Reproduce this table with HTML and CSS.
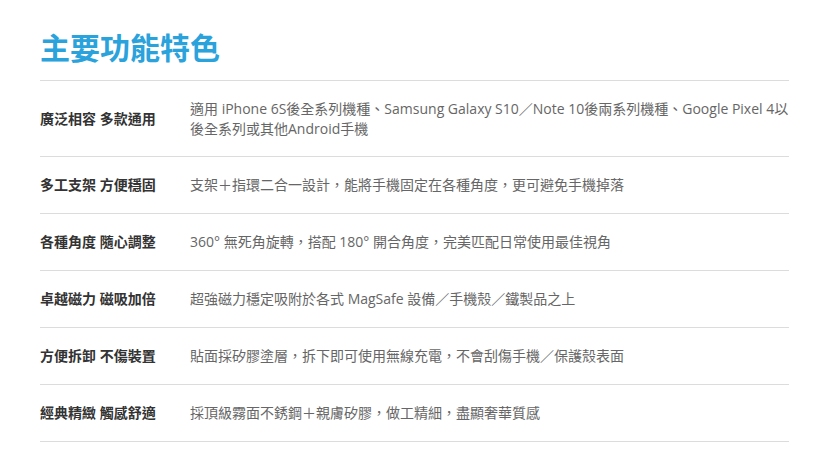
FILE: index.html
```html
<!DOCTYPE html>
<html lang="zh-Hant">
<head>
<meta charset="utf-8">
<link rel="stylesheet" href="styles.css">
</head>
<body>
<section class="features">
  <h2 class="features-title">主要功能特色</h2>
  <div class="features-table">
    <div class="row">
      <div class="label">廣泛相容 多款通用</div>
      <div class="desc">適用 iPhone 6S後全系列機種、Samsung Galaxy S10／Note 10後兩系列機種、Google Pixel 4以後全系列或其他Android手機</div>
    </div>
    <div class="row">
      <div class="label">多工支架 方便穩固</div>
      <div class="desc">支架＋指環二合一設計，能將手機固定在各種角度，更可避免手機掉落</div>
    </div>
    <div class="row">
      <div class="label">各種角度 隨心調整</div>
      <div class="desc">360° 無死角旋轉，搭配 180° 開合角度，完美匹配日常使用最佳視角</div>
    </div>
    <div class="row">
      <div class="label">卓越磁力 磁吸加倍</div>
      <div class="desc">超強磁力穩定吸附於各式 MagSafe 設備／手機殼／鐵製品之上</div>
    </div>
    <div class="row">
      <div class="label">方便拆卸 不傷裝置</div>
      <div class="desc">貼面採矽膠塗層，拆下即可使用無線充電，不會刮傷手機／保護殼表面</div>
    </div>
    <div class="row">
      <div class="label">經典精緻 觸感舒適</div>
      <div class="desc">採頂級霧面不銹鋼＋親膚矽膠，做工精細，盡顯奢華質感</div>
    </div>
  </div>
</section>
</body>
</html>
```
FILE: styles.css
```css
* { box-sizing: border-box; }
html, body { margin: 0; padding: 0; background: #fff; }
body {
  font-family: "Open Sans", "Noto Sans CJK JP", sans-serif;
  color: #333;
}
.features {
  width: 749px;
  margin-left: 40px;
  padding-top: 28px;
}
.features-title {
  margin: 0 0 16px;
  font-size: 30px;
  line-height: 36px;
  font-weight: 700;
  color: #2aa2dc;
  font-family: "Noto Sans CJK TC", sans-serif;
}
.features-table {
  border-top: 1px solid #dcdcdc;
}
.row {
  display: flex;
  align-items: center;
  padding: 18px 0;
  border-bottom: 1px solid #dcdcdc;
}
.label {
  flex: 0 0 150px;
  font-size: 14px;
  line-height: 20px;
  font-weight: 700;
  color: #333;
}
.desc {
  flex: 1;
  font-size: 14px;
  line-height: 19.5px;
  color: #666;
}
```
